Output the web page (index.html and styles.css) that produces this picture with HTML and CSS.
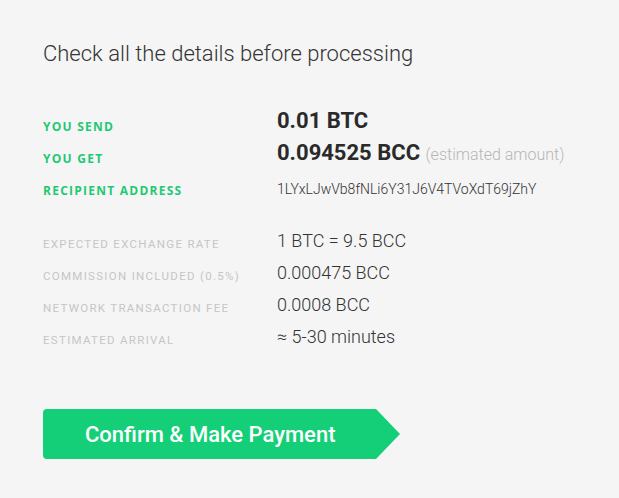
FILE: index.html
```html
<!DOCTYPE html>
<html>
<head>
<meta charset="utf-8">
<link rel="stylesheet" href="styles.css">
</head>
<body>
<div class="page">
  <h1 class="title">Check all the details before processing</h1>
  <div class="details">
    <div class="label label-main">You send</div>
    <div class="value value-big">0.01 BTC</div>
    <div class="label label-main">You get</div>
    <div class="value value-big">0.094525 BCC <span class="note">(estimated amount)</span></div>
    <div class="label label-main">Recipient address</div>
    <div class="value value-addr">1LYxLJwVb8fNLi6Y31J6V4TVoXdT69jZhY</div>
  </div>
  <div class="details details-sub">
    <div class="label label-sub">Expected exchange rate</div>
    <div class="value value-sub">1 BTC = 9.5 BCC</div>
    <div class="label label-sub">Commission included (0.5%)</div>
    <div class="value value-sub">0.000475 BCC</div>
    <div class="label label-sub">Network transaction fee</div>
    <div class="value value-sub">0.0008 BCC</div>
    <div class="label label-sub">Estimated arrival</div>
    <div class="value value-sub">≈ 5-30 minutes</div>
  </div>
  <button class="confirm">Confirm &amp; Make Payment</button>
</div>
</body>
</html>
```
FILE: styles.css
```css
html, body {
  margin: 0;
  padding: 0;
  background: #f5f5f5;
}
body {
  font-family: Roboto, "Liberation Sans", sans-serif;
  color: #333;
}
.page {
  padding: 38px 43px 0 43px;
}
.title {
  margin: 0;
  font-weight: 300;
  font-size: 22px;
  line-height: 32px;
  color: #333;
}
.details {
  display: grid;
  grid-template-columns: 234px auto;
  grid-auto-rows: 32px;
  align-items: center;
  margin-top: 39px;
}
.details-sub {
  margin-top: 21px;
}
.label {
  text-transform: uppercase;
}
.label-main {
  font-family: "Open Sans", sans-serif;
  font-weight: 700;
  font-size: 12px;
  color: #1fc974;
  letter-spacing: 1.25px;
  padding-top: 2px;
}
.label-sub {
  font-size: 11.5px;
  color: #c6c6c6;
  letter-spacing: 1.3px;
  padding-top: 3px;
}
.value-big {
  font-size: 22px;
  font-weight: 700;
  color: #2a2a2a;
  margin-bottom: 10px;
}
.note {
  font-size: 16px;
  font-weight: 300;
  color: #b5b5b5;
}
.value-addr {
  font-size: 14px;
  font-weight: 300;
  color: #333;
}
.value-sub {
  font-size: 18px;
  font-weight: 300;
  color: #333;
  margin-bottom: 3px;
}
.confirm {
  margin-top: 55px;
  display: block;
  width: 357px;
  height: 50px;
  border: none;
  padding: 0 0 0 42px;
  text-align: left;
  background: #14cf78;
  color: #fff;
  font-family: Roboto, sans-serif;
  font-weight: 500;
  font-size: 22px;
  border-radius: 4px;
  clip-path: polygon(0 0, 333px 0, 357px 25px, 333px 50px, 0 50px);
  cursor: pointer;
}
```
